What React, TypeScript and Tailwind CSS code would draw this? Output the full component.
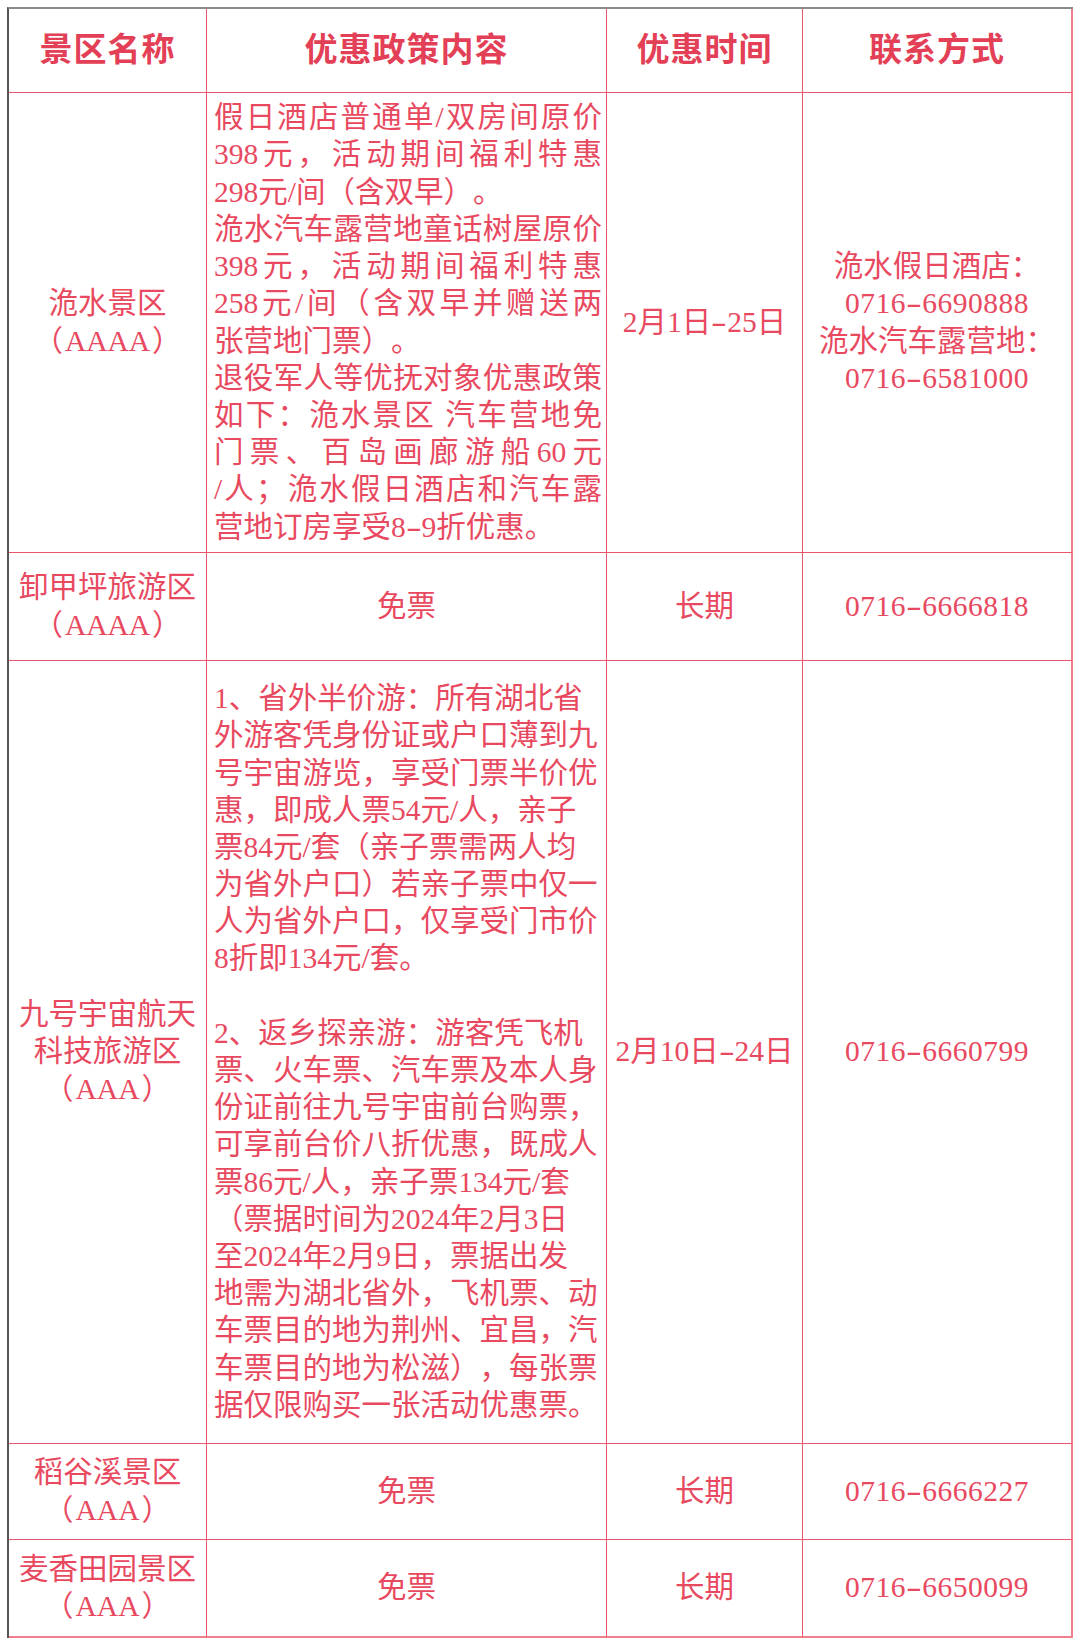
import type { ReactNode } from 'react';

const cell =
  'flex flex-col items-center justify-center text-center border-r border-b border-[#e8576b]';

// the source font has a half-em dash for "-"
const H = () => <span className="inline-block scale-x-[1.6] mx-[3px]">-</span>;

const Phone = ({ a, b }: { a: string; b: string }) => (
  <div className="tracking-[0.5px] whitespace-nowrap">
    {a}
    <H />
    {b}
  </div>
);

const Level = ({ a }: { a: string }) => (
  <div className="whitespace-nowrap">
    （<span className="mx-[2px]">{a}</span>）
  </div>
);

// full-width lines of the first policy are spread edge to edge
const J = ({ children }: { children: ReactNode }) => (
  <div className="text-justify [text-align-last:justify]">{children}</div>
);

const L = ({ children }: { children?: ReactNode }) => (
  <div className="whitespace-nowrap h-[37.2px]">{children}</div>
);

const App = () => {
  return (
    <div className="w-[1080px] h-[1644px] bg-white pt-[7px] pl-[7px] font-['Liberation_Serif','Noto_Sans_CJK_SC',serif] text-[#e8495f] [text-spacing-trim:space-all]">
      <div className="w-[1066px] border-t-2 border-t-[#8a8a8a] border-l-2 border-l-[#555555] grid grid-cols-[198px_400px_196px_270px] grid-rows-[84px_460px_108px_783px_96px_98px] text-[29.5px] leading-[37.2px]">
        {/* header */}
        <div className={`${cell} text-[33px] font-bold tracking-[1px] text-[#e33f57]`}>景区名称</div>
        <div className={`${cell} text-[33px] font-bold tracking-[1px] text-[#e33f57]`}>优惠政策内容</div>
        <div className={`${cell} text-[33px] font-bold tracking-[1px] text-[#e33f57]`}>优惠时间</div>
        <div className={`${cell} text-[33px] font-bold tracking-[1px] text-[#e33f57] border-r-2 border-r-[#f07f8e]`}>联系方式</div>

        {/* 洈水景区 */}
        <div className={cell}>
          <div>洈水景区</div>
          <Level a="AAAA" />
        </div>
        <div className={`${cell} !items-stretch !text-left pl-[7px] pr-[4px]`}>
          <J>假日酒店普通单/双房间原价</J>
          <J>398元，活动期间福利特惠</J>
          <div>298元/间（含双早）。</div>
          <J>洈水汽车露营地童话树屋原价</J>
          <J>398元，活动期间福利特惠</J>
          <J>258元/间（含双早并赠送两</J>
          <div>张营地门票）。</div>
          <J>退役军人等优抚对象优惠政策</J>
          <J>如下：洈水景区 汽车营地免</J>
          <J>门票、百岛画廊游船60元</J>
          <J>/人；洈水假日酒店和汽车露</J>
          <div>营地订房享受8<H />9折优惠。</div>
        </div>
        <div className={cell}>
          <div className="whitespace-nowrap">2月1日<H />25日</div>
        </div>
        <div className={`${cell} border-r-2 border-r-[#f07f8e]`}>
          <div>洈水假日酒店：</div>
          <Phone a="0716" b="6690888" />
          <div>洈水汽车露营地：</div>
          <Phone a="0716" b="6581000" />
        </div>

        {/* 卸甲坪 */}
        <div className={cell}>
          <div className="whitespace-nowrap">卸甲坪旅游区</div>
          <Level a="AAAA" />
        </div>
        <div className={cell}>免票</div>
        <div className={cell}>长期</div>
        <div className={`${cell} border-r-2 border-r-[#f07f8e]`}>
          <Phone a="0716" b="6666818" />
        </div>

        {/* 九号宇宙 */}
        <div className={cell}>
          <div>九号宇宙航天</div>
          <div>科技旅游区</div>
          <Level a="AAA" />
        </div>
        <div className={`${cell} !items-stretch !text-left pl-[7px] pr-[4px]`}>
          <L>1、省外半价游：所有湖北省</L>
          <L>外游客凭身份证或户口薄到九</L>
          <L>号宇宙游览，享受门票半价优</L>
          <L>惠，即成人票54元/人，亲子</L>
          <L>票84元/套（亲子票需两人均</L>
          <L>为省外户口）若亲子票中仅一</L>
          <L>人为省外户口，仅享受门市价</L>
          <L>8折即134元/套。</L>
          <L />
          <L>2、返乡探亲游：游客凭飞机</L>
          <L>票、火车票、汽车票及本人身</L>
          <L>份证前往九号宇宙前台购票，</L>
          <L>可享前台价八折优惠，既成人</L>
          <L>票86元/人，亲子票134元/套</L>
          <L>（票据时间为2024年2月3日</L>
          <L>至2024年2月9日，票据出发</L>
          <L>地需为湖北省外，飞机票、动</L>
          <L>车票目的地为荆州、宜昌，汽</L>
          <L>车票目的地为松滋），每张票</L>
          <L>据仅限购买一张活动优惠票。</L>
        </div>
        <div className={cell}>
          <div className="whitespace-nowrap">2月10日<H />24日</div>
        </div>
        <div className={`${cell} border-r-2 border-r-[#f07f8e]`}>
          <Phone a="0716" b="6660799" />
        </div>

        {/* 稻谷溪 */}
        <div className={cell}>
          <div>稻谷溪景区</div>
          <Level a="AAA" />
        </div>
        <div className={cell}>免票</div>
        <div className={cell}>长期</div>
        <div className={`${cell} border-r-2 border-r-[#f07f8e]`}>
          <Phone a="0716" b="6666227" />
        </div>

        {/* 麦香田园 */}
        <div className={`${cell} border-b-2 border-b-[#f07f8e]`}>
          <div className="whitespace-nowrap">麦香田园景区</div>
          <Level a="AAA" />
        </div>
        <div className={`${cell} border-b-2 border-b-[#f07f8e]`}>免票</div>
        <div className={`${cell} border-b-2 border-b-[#f07f8e]`}>长期</div>
        <div className={`${cell} border-r-2 border-r-[#f07f8e] border-b-2 border-b-[#f07f8e]`}>
          <Phone a="0716" b="6650099" />
        </div>
      </div>
    </div>
  );
};

export default App;
